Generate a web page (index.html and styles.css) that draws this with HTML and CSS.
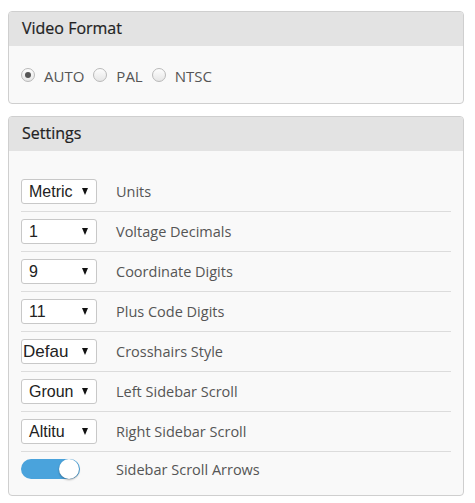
FILE: index.html
```html
<!DOCTYPE html>
<html>
<head>
<meta charset="utf-8">
<link rel="stylesheet" href="styles.css">
</head>
<body>
<div class="panel">
  <div class="panel-head">Video Format</div>
  <div class="panel-body radios">
    <label class="radio"><span class="dot checked"></span>AUTO</label>
    <label class="radio"><span class="dot"></span>PAL</label>
    <label class="radio"><span class="dot"></span>NTSC</label>
  </div>
</div>
<div class="panel">
  <div class="panel-head">Settings</div>
  <div class="panel-body settings">
    <div class="row"><div class="select"><span class="val">Metric</span><span class="arrow"></span></div><span class="label">Units</span></div>
    <div class="row"><div class="select"><span class="val">1</span><span class="arrow"></span></div><span class="label">Voltage Decimals</span></div>
    <div class="row"><div class="select"><span class="val">9</span><span class="arrow"></span></div><span class="label">Coordinate Digits</span></div>
    <div class="row"><div class="select"><span class="val">11</span><span class="arrow"></span></div><span class="label">Plus Code Digits</span></div>
    <div class="row"><div class="select"><span class="val tight">Defau</span><span class="arrow"></span></div><span class="label">Crosshairs Style</span></div>
    <div class="row"><div class="select"><span class="val">Groun</span><span class="arrow"></span></div><span class="label">Left Sidebar Scroll</span></div>
    <div class="row"><div class="select"><span class="val">Altitu</span><span class="arrow"></span></div><span class="label">Right Sidebar Scroll</span></div>
    <div class="row"><div class="toggle"><span class="knob"></span></div><span class="label">Sidebar Scroll Arrows</span></div>
  </div>
</div>
</body>
</html>
```
FILE: styles.css
```css
html, body {
  margin: 0;
  padding: 0;
  background: #ffffff;
}
body {
  padding: 11px 11px 0 8px;
  font-family: "Open Sans", sans-serif;
  color: #555;
}
.panel {
  border: 1px solid #cfcfcf;
  border-radius: 4px;
  background: #f9f9f9;
  margin-bottom: 12px;
  overflow: hidden;
}
.panel-head {
  background: #e3e3e3;
  height: 34px;
  line-height: 33px;
  padding-left: 13px;
  font-size: 16px;
  font-weight: 400;
  color: #222;
  -webkit-text-stroke: 0.2px #222;
}
.radios {
  height: 57px;
  display: flex;
  align-items: center;
  padding-left: 12px;
  gap: 9px;
}
.radio {
  display: flex;
  align-items: center;
  font-size: 15px;
  color: #555;
  margin-top: 3px;
}
.dot {
  width: 12px;
  height: 12px;
  border: 1px solid #b9b9b9;
  border-radius: 50%;
  background: linear-gradient(#fdfdfd, #e6e6e6);
  margin-right: 9px;
  position: relative;
  margin-top: -2px;
}
.dot.checked::after {
  content: "";
  position: absolute;
  left: 3px;
  top: 3px;
  width: 6px;
  height: 6px;
  border-radius: 50%;
  background: #555;
}
.settings {
  padding: 21px 12px 9px 12px;
}
.row {
  display: flex;
  align-items: center;
  padding: 7px 0;
  border-bottom: 1px solid #dcdcdc;
}
.row:last-child {
  border-bottom: none;
}
.select {
  width: 74px;
  height: 23px;
  border: 1px solid #c8c8c8;
  border-radius: 3px;
  background: #fff;
  display: flex;
  align-items: center;
  font-family: "Liberation Sans", Arial, sans-serif;
  font-size: 16px;
  color: #222;
  margin-right: 19px;
}
.val {
  width: 46px;
  margin-left: 7px;
  white-space: nowrap;
}
.val.tight {
  margin-left: 1px;
  width: 52px;
  font-size: 17px;
}
.arrow {
  margin-left: 7px;
  width: 0;
  height: 0;
  border-left: 3.5px solid transparent;
  border-right: 3.5px solid transparent;
  border-top: 7px solid #111;
}
.label {
  font-size: 14.5px;
  color: #555;
}
.toggle {
  width: 59px;
  height: 20px;
  border-radius: 10px;
  background: #4aa3dc;
  margin-right: 36px;
  position: relative;
}
.knob {
  position: absolute;
  right: 1px;
  top: 0;
  width: 20px;
  height: 20px;
  border-radius: 50%;
  background: #fff;
  box-shadow: 0 1px 2px rgba(0,0,0,0.35);
}
```
